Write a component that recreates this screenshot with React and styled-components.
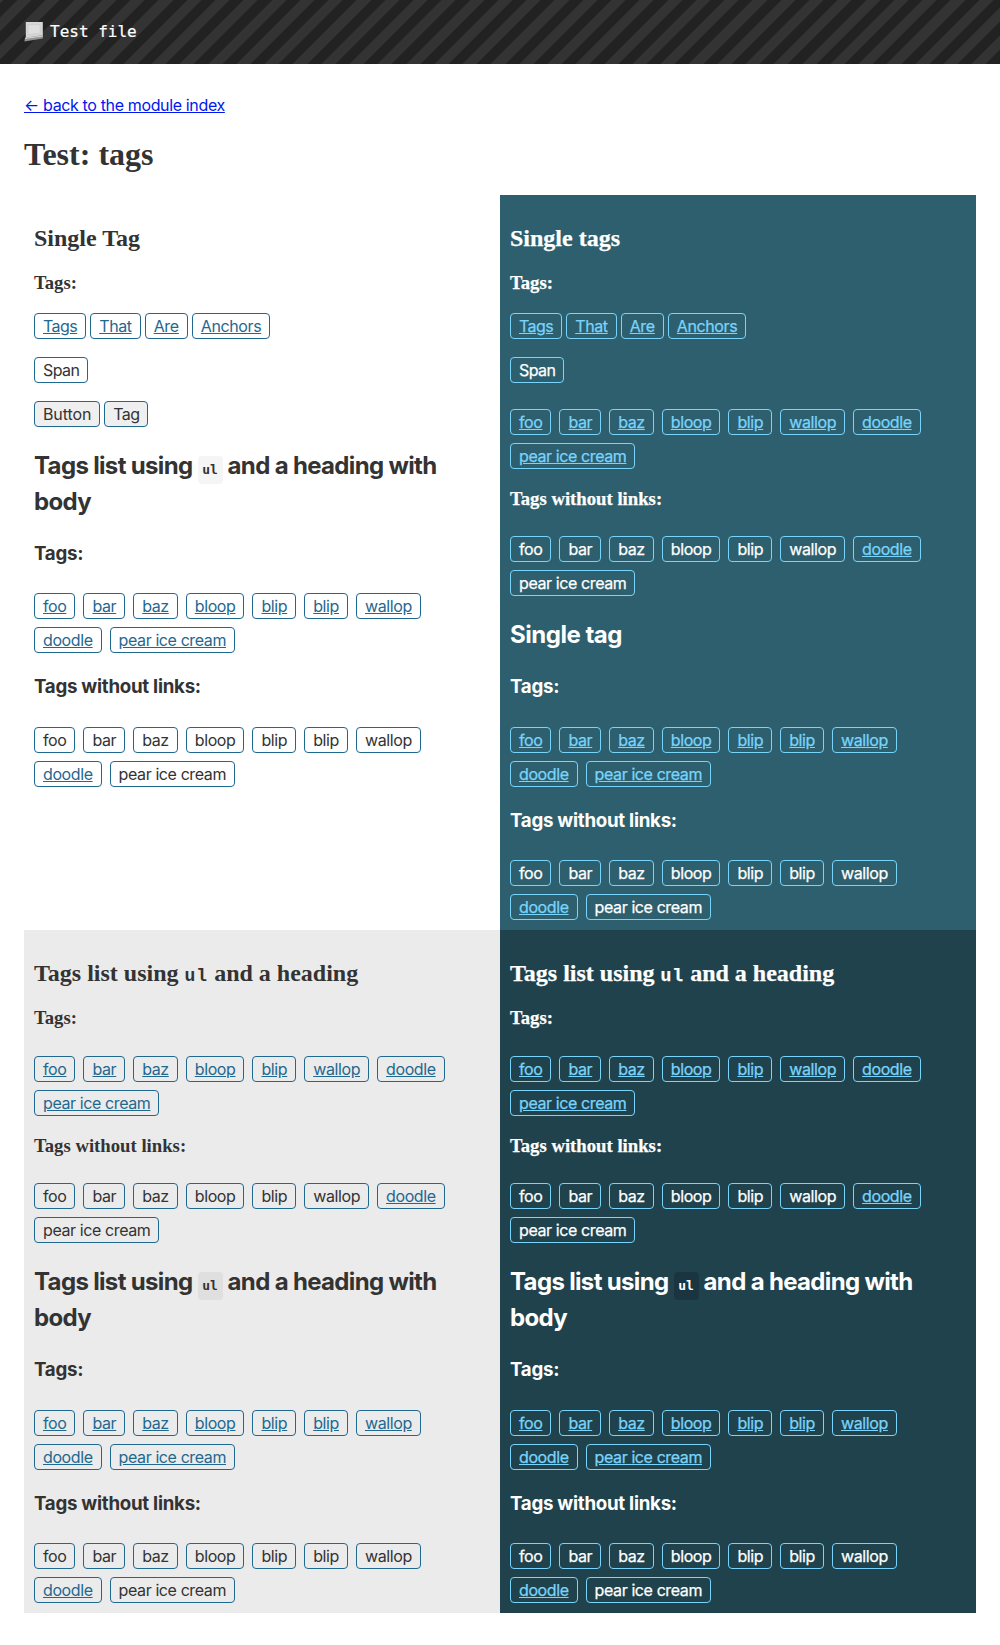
import React from "react";
import styled, { createGlobalStyle, ThemeProvider } from "styled-components";

const sans = `Inter, "Liberation Sans", sans-serif`;
const serif = `"Liberation Serif", serif`;

const light = { text: "#333333", accent: "#1f6890", chip: "#f5f5f5", background: "#ffffff", stroke: "0" };
const grey = { text: "#333333", accent: "#1f6890", chip: "#dfdfdf", background: "#ebebeb", stroke: "0" };
const teal = { text: "#ffffff", accent: "#79d4fb", chip: "#24505d", background: "#2d5f6e", stroke: "0.25px" };
const dark = { text: "#ffffff", accent: "#79d4fb", chip: "#1a353f", background: "#20424c", stroke: "0.25px" };

const GlobalStyle = createGlobalStyle`
  body {
    margin: 0;
    background: #ffffff;
    color: #333333;
    font-family: ${sans};
    font-size: 16px;
  }
`;

const Header = styled.header`
  box-sizing: border-box;
  display: flex;
  align-items: center;
  gap: 6px;
  height: 64px;
  padding: 0 24px 1px;
  color: #ffffff;
  font: 16px/24px "DejaVu Sans Mono", monospace;
  -webkit-text-stroke: 0.2px;
  background: repeating-linear-gradient(-45deg, #222222, #222222 10px, #333333 10px, #333333 20px);
`;

const Main = styled.main`
  padding: 29px 24px 32px;
`;

const BackLink = styled.a`
  display: block;
  width: fit-content;
  line-height: 24px;
  letter-spacing: -0.36px;
  color: #0018ee;
  text-decoration: underline;
`;

const Title = styled.h1`
  margin: 19px 0 23px;
  font: bold 32px/36px ${serif};
`;

const Panels = styled.div`
  display: grid;
  grid-template-columns: 476px 476px;
  grid-template-rows: 735px 683px;
`;

const PanelBox = styled.section`
  box-sizing: border-box;
  padding: 30px 10px 10px;
  color: ${(p) => p.theme.text};
  background: ${(p) => p.theme.background};
`;

const SerifHeading = styled.h2`
  margin: 0 0 20px;
  font: bold 24px/27.4px ${serif};
  -webkit-text-stroke: ${(p) => p.theme.stroke};
`;

const SerifSubheading = styled.h3`
  margin: 0 0 ${(p) => p.$gap ?? 27.5}px;
  font: bold 18.72px/21px ${serif};
  -webkit-text-stroke: ${(p) => p.theme.stroke};
`;

const BodyHeading = styled.h2`
  margin: 0 0 20px;
  font: bold 24px/36px ${sans};
  letter-spacing: ${(p) => p.$tracking ?? -0.66}px;
`;

const BodySubheading = styled.h3`
  margin: 0 0 25.4px;
  font: bold 18.72px/28.1px ${sans};
  letter-spacing: -0.27px;
`;

const SerifCode = styled.code`
  font: bold 18px/20px "Liberation Mono", monospace;
  letter-spacing: 1px;
`;

const CodeChip = styled.code`
  display: inline-block;
  margin: -8px 0;
  padding: 0 4.7px;
  border-radius: 4px;
  background: ${(p) => p.theme.chip};
  font: bold 13px/28px "DejaVu Sans Mono", monospace;
  letter-spacing: 0;
`;

const InlineTags = styled.div`
  display: flex;
  gap: 4px;
  margin-bottom: ${(p) => p.$gap ?? 18}px;
`;

const TagList = styled.ul`
  display: flex;
  flex-wrap: wrap;
  gap: 8px;
  margin: 0 0 ${(p) => p.$gap ?? 18.9}px;
  padding: 0;
  list-style: none;
`;

const TagBox = styled.span`
  box-sizing: border-box;
  display: block;
  height: 26px;
  margin: 0;
  padding: 0 8px;
  border: 1px solid ${(p) => p.theme.accent};
  border-radius: 4px;
  background: transparent;
  color: ${(p) => p.theme.text};
  font: 16px/24px ${sans};
  letter-spacing: ${(p) => p.$tracking ?? -0.4}px;
  -webkit-text-stroke: ${(p) => p.theme.stroke};
  white-space: nowrap;
`;

const LinkTag = styled(TagBox).attrs({ as: "a", href: "#" })`
  color: ${(p) => p.theme.accent};
  text-decoration: underline;
`;

const ButtonTag = styled(TagBox).attrs({ as: "button" })`
  background: #efefef;
`;

function PageIcon() {
  return (
    <svg width="20" height="20" viewBox="0 0 20 20">
      <path d="M1.8 0h17v15L1.8 16.8z" fill="#d6d6d6" />
      <path d="M4 2.6h12.2v8.6L4 12.6z" fill="#dedede" stroke="#c6c6c6" strokeWidth=".6" />
      <path d="M1 15.8 18.8 13v3.6L.4 19.4z" fill="#929292" />
      <path d="M1 16.4 18.8 14" stroke="#e8e8e8" strokeWidth=".8" />
    </svg>
  );
}

const shortList = ["foo", "bar", "baz", "bloop", "blip", "wallop", "doodle", "pear ice cream"];
const longList = ["foo", "bar", "baz", "bloop", "blip", "blip", "wallop", "doodle", "pear ice cream"];

function Tags({ items, linked, gap }) {
  return (
    <TagList $gap={gap}>
      {items.map((label, i) => {
        const Tag = linked || label === "doodle" ? LinkTag : TagBox;
        return (
          <li key={i}>
            <Tag>{label}</Tag>
          </li>
        );
      })}
    </TagList>
  );
}

function Panel({ theme, children }) {
  return (
    <ThemeProvider theme={theme}>
      <PanelBox>{children}</PanelBox>
    </ThemeProvider>
  );
}

function SingleTags({ lastGap }) {
  return (
    <>
      <SerifSubheading $gap={19.6}>Tags:</SerifSubheading>
      <InlineTags>
        <LinkTag $tracking={-0.55}>Tags</LinkTag>
        <LinkTag>That</LinkTag>
        <LinkTag $tracking={-0.3}>Are</LinkTag>
        <LinkTag>Anchors</LinkTag>
      </InlineTags>
      <InlineTags $gap={lastGap}>
        <TagBox $tracking={-0.6}>Span</TagBox>
      </InlineTags>
    </>
  );
}

function BodyLists() {
  return (
    <>
      <BodySubheading>Tags:</BodySubheading>
      <Tags items={longList} linked gap={19.9} />
      <BodySubheading>Tags without links:</BodySubheading>
      <Tags items={longList} gap={0} />
    </>
  );
}

function BodySection() {
  return (
    <>
      <BodyHeading>
        Tags list using <CodeChip>ul</CodeChip> and a heading with body
      </BodyHeading>
      <BodyLists />
    </>
  );
}

function SerifSection() {
  return (
    <>
      <SerifHeading>
        Tags list using <SerifCode>ul</SerifCode> and a heading
      </SerifHeading>
      <SerifSubheading>Tags:</SerifSubheading>
      <Tags items={shortList} linked />
      <SerifSubheading>Tags without links:</SerifSubheading>
      <Tags items={shortList} gap={21} />
    </>
  );
}

export default function App() {
  return (
    <>
      <GlobalStyle />
      <Header>
        <PageIcon />
        <span>Test file</span>
      </Header>
      <Main>
        <BackLink href="#">← back to the module index</BackLink>
        <Title>Test: tags</Title>
        <Panels>
          <Panel theme={light}>
            <SerifHeading>Single Tag</SerifHeading>
            <SingleTags />
            <InlineTags $gap={20.9}>
              <ButtonTag $tracking={-0.1}>Button</ButtonTag>
              <ButtonTag $tracking={-0.6}>Tag</ButtonTag>
            </InlineTags>
            <BodySection />
          </Panel>
          <Panel theme={teal}>
            <SerifHeading>Single tags</SerifHeading>
            <SingleTags lastGap={26} />
            <Tags items={shortList} linked />
            <SerifSubheading>Tags without links:</SerifSubheading>
            <Tags items={shortList} gap={20.9} />
            <BodyHeading $tracking={-0.48}>Single tag</BodyHeading>
            <BodyLists />
          </Panel>
          <Panel theme={grey}>
            <SerifSection />
            <BodySection />
          </Panel>
          <Panel theme={dark}>
            <SerifSection />
            <BodySection />
          </Panel>
        </Panels>
      </Main>
    </>
  );
}
